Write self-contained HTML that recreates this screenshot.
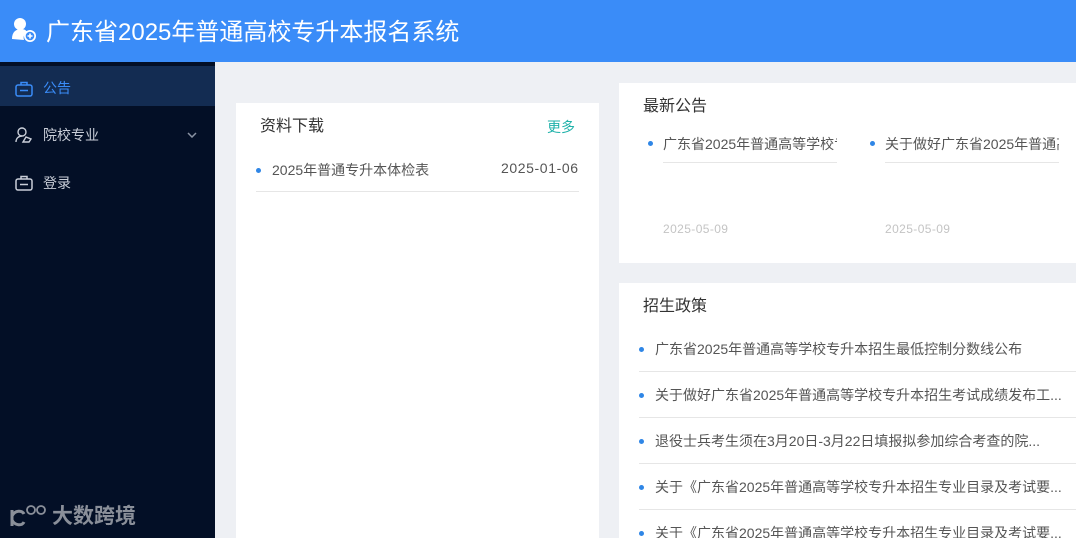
<!DOCTYPE html>
<html><head><meta charset="utf-8"><style>
*{margin:0;padding:0;box-sizing:border-box}
html,body{width:1076px;height:538px;overflow:hidden}
body{background:#eef0f4;font-family:"Liberation Sans","Noto Sans CJK SC",sans-serif;position:relative}
.hdr{position:absolute;left:0;top:0;width:1076px;height:62px;background:#3a8cf8;color:#fff}
.hdr .t{position:absolute;left:46px;top:17px;font-size:24px;line-height:32px}
.side{position:absolute;left:0;top:62px;width:215px;height:476px;background:#030f26}
.mi{position:absolute;left:0;width:215px;height:40px;color:#c9ced8;font-size:14px;line-height:46px;padding-left:43px}
.mi svg{position:absolute;left:15px;top:15px}
.card{position:absolute;background:#fff}
.dot{position:absolute;width:5px;height:5px;border-radius:50%;background:#2f86e6}
.txt{position:absolute;font-size:14px;color:#555;white-space:nowrap}
.line{position:absolute;height:1px;background:#e6e6e6}
</style></head><body>
<div class="hdr">
<svg style="position:absolute;left:11px;top:17px" width="28" height="26" viewBox="0 0 28 26"><circle cx="9" cy="7" r="6" fill="#fff"/><path d="M1 22c0-7 4-10 9-10 3 0 5 1 6 3-3 2-4 5-3 8z" fill="#fff"/><circle cx="19" cy="19" r="6" fill="#fff"/><circle cx="19" cy="19" r="4.3" fill="#3a8cf8"/><path d="M16.5 19h5M19 16.5v5" stroke="#fff" stroke-width="1.6"/></svg>
<div class="t">广东省2025年普通高校专升本报名系统</div></div>
<div class="side">
<div class="mi" style="top:4px;height:40px;background:#132c52;color:#3a8cf8;line-height:44px"><svg width="18" height="16" viewBox="0 0 18 16"><rect x="1" y="4" width="16" height="11" rx="2" fill="none" stroke="#3a8cf8" stroke-width="1.5"/><path d="M6 4V1.5h6V4M5 9.5h8" stroke="#3a8cf8" stroke-width="1.5" fill="none"/></svg>公告</div>
<div class="mi" style="top:50px"><svg width="18" height="16" viewBox="0 0 18 16"><circle cx="7" cy="5" r="4" fill="none" stroke="#c9ced8" stroke-width="1.4"/><path d="M1 15c0-4 3-6 6-6M8 15l3-5 5 2-2 3z" fill="none" stroke="#c9ced8" stroke-width="1.4"/></svg>院校专业<svg style="left:187px;top:20px" width="10" height="6" viewBox="0 0 10 6"><path d="M1 1l4 4 4-4" fill="none" stroke="#8a93a3" stroke-width="1.5"/></svg></div>
<div class="mi" style="top:98px"><svg width="18" height="16" viewBox="0 0 18 16"><rect x="1" y="4" width="16" height="11" rx="2" fill="none" stroke="#c9ced8" stroke-width="1.5"/><path d="M6 4V1.5h6V4M5 9.5h8" stroke="#c9ced8" stroke-width="1.5" fill="none"/></svg>登录</div>
<svg style="position:absolute;left:9px;top:442px" width="40" height="24" viewBox="0 0 40 24"><path d="M3 6v16M3 12c3-6 10-6 12-2M15 18c-2 4-9 4-12-2" fill="none" stroke="#8a8f99" stroke-width="3"/><circle cx="22" cy="6" r="4" fill="none" stroke="#8a8f99" stroke-width="1.8"/><circle cx="32" cy="6" r="4" fill="none" stroke="#8a8f99" stroke-width="1.8"/></svg>
<div style="position:absolute;left:52px;top:442px;color:#8a8f99;font-size:21px;font-weight:bold;line-height:26px">大数跨境</div>
</div>
<div class="card" style="left:236px;top:103px;width:363px;height:440px">
<div class="txt" style="left:24px;top:9px;font-size:16px;color:#333">资料下载</div>
<div class="txt" style="left:311px;top:14px;color:#20b2aa">更多</div>
<div class="dot" style="left:20px;top:65px"></div>
<div class="txt" style="left:36px;top:57px">2025年普通专升本体检表</div>
<div class="txt" style="left:265px;top:57px;letter-spacing:0.6px">2025-01-06</div>
<div class="line" style="left:20px;top:88px;width:323px"></div>
</div>
<div class="card" style="left:619px;top:83px;width:457px;height:180px">
<div class="txt" style="left:24px;top:9px;font-size:16px;color:#333">最新公告</div>
<div class="dot" style="left:29px;top:58px"></div>
<div class="txt" style="left:44px;top:51px;width:174px;overflow:hidden">广东省2025年普通高等学校专升本</div>
<div class="line" style="left:44px;top:79px;width:174px"></div>
<div class="dot" style="left:251px;top:58px"></div>
<div class="txt" style="left:266px;top:51px;width:174px;overflow:hidden">关于做好广东省2025年普通高等</div>
<div class="line" style="left:266px;top:79px;width:174px"></div>
<div class="txt" style="left:44px;top:139px;font-size:12px;color:#c4c4c4;letter-spacing:0.4px">2025-05-09</div>
<div class="txt" style="left:266px;top:139px;font-size:12px;color:#c4c4c4;letter-spacing:0.4px">2025-05-09</div>
</div>
<div class="card" style="left:619px;top:283px;width:457px;height:260px">
<div class="txt" style="left:24px;top:9px;font-size:16px;color:#333">招生政策</div>
<div class="dot" style="left:20px;top:64px"></div><div class="txt" style="left:36px;top:56px">广东省2025年普通高等学校专升本招生最低控制分数线公布</div><div class="line" style="left:20px;top:88px;width:437px"></div>
<div class="dot" style="left:20px;top:110px"></div><div class="txt" style="left:36px;top:102px">关于做好广东省2025年普通高等学校专升本招生考试成绩发布工...</div><div class="line" style="left:20px;top:134px;width:437px"></div>
<div class="dot" style="left:20px;top:156px"></div><div class="txt" style="left:36px;top:148px">退役士兵考生须在3月20日-3月22日填报拟参加综合考查的院...</div><div class="line" style="left:20px;top:180px;width:437px"></div>
<div class="dot" style="left:20px;top:202px"></div><div class="txt" style="left:36px;top:194px">关于《广东省2025年普通高等学校专升本招生专业目录及考试要...</div><div class="line" style="left:20px;top:226px;width:437px"></div>
<div class="dot" style="left:20px;top:248px"></div><div class="txt" style="left:36px;top:240px">关于《广东省2025年普通高等学校专升本招生专业目录及考试要...</div>
</div>
</body></html>
